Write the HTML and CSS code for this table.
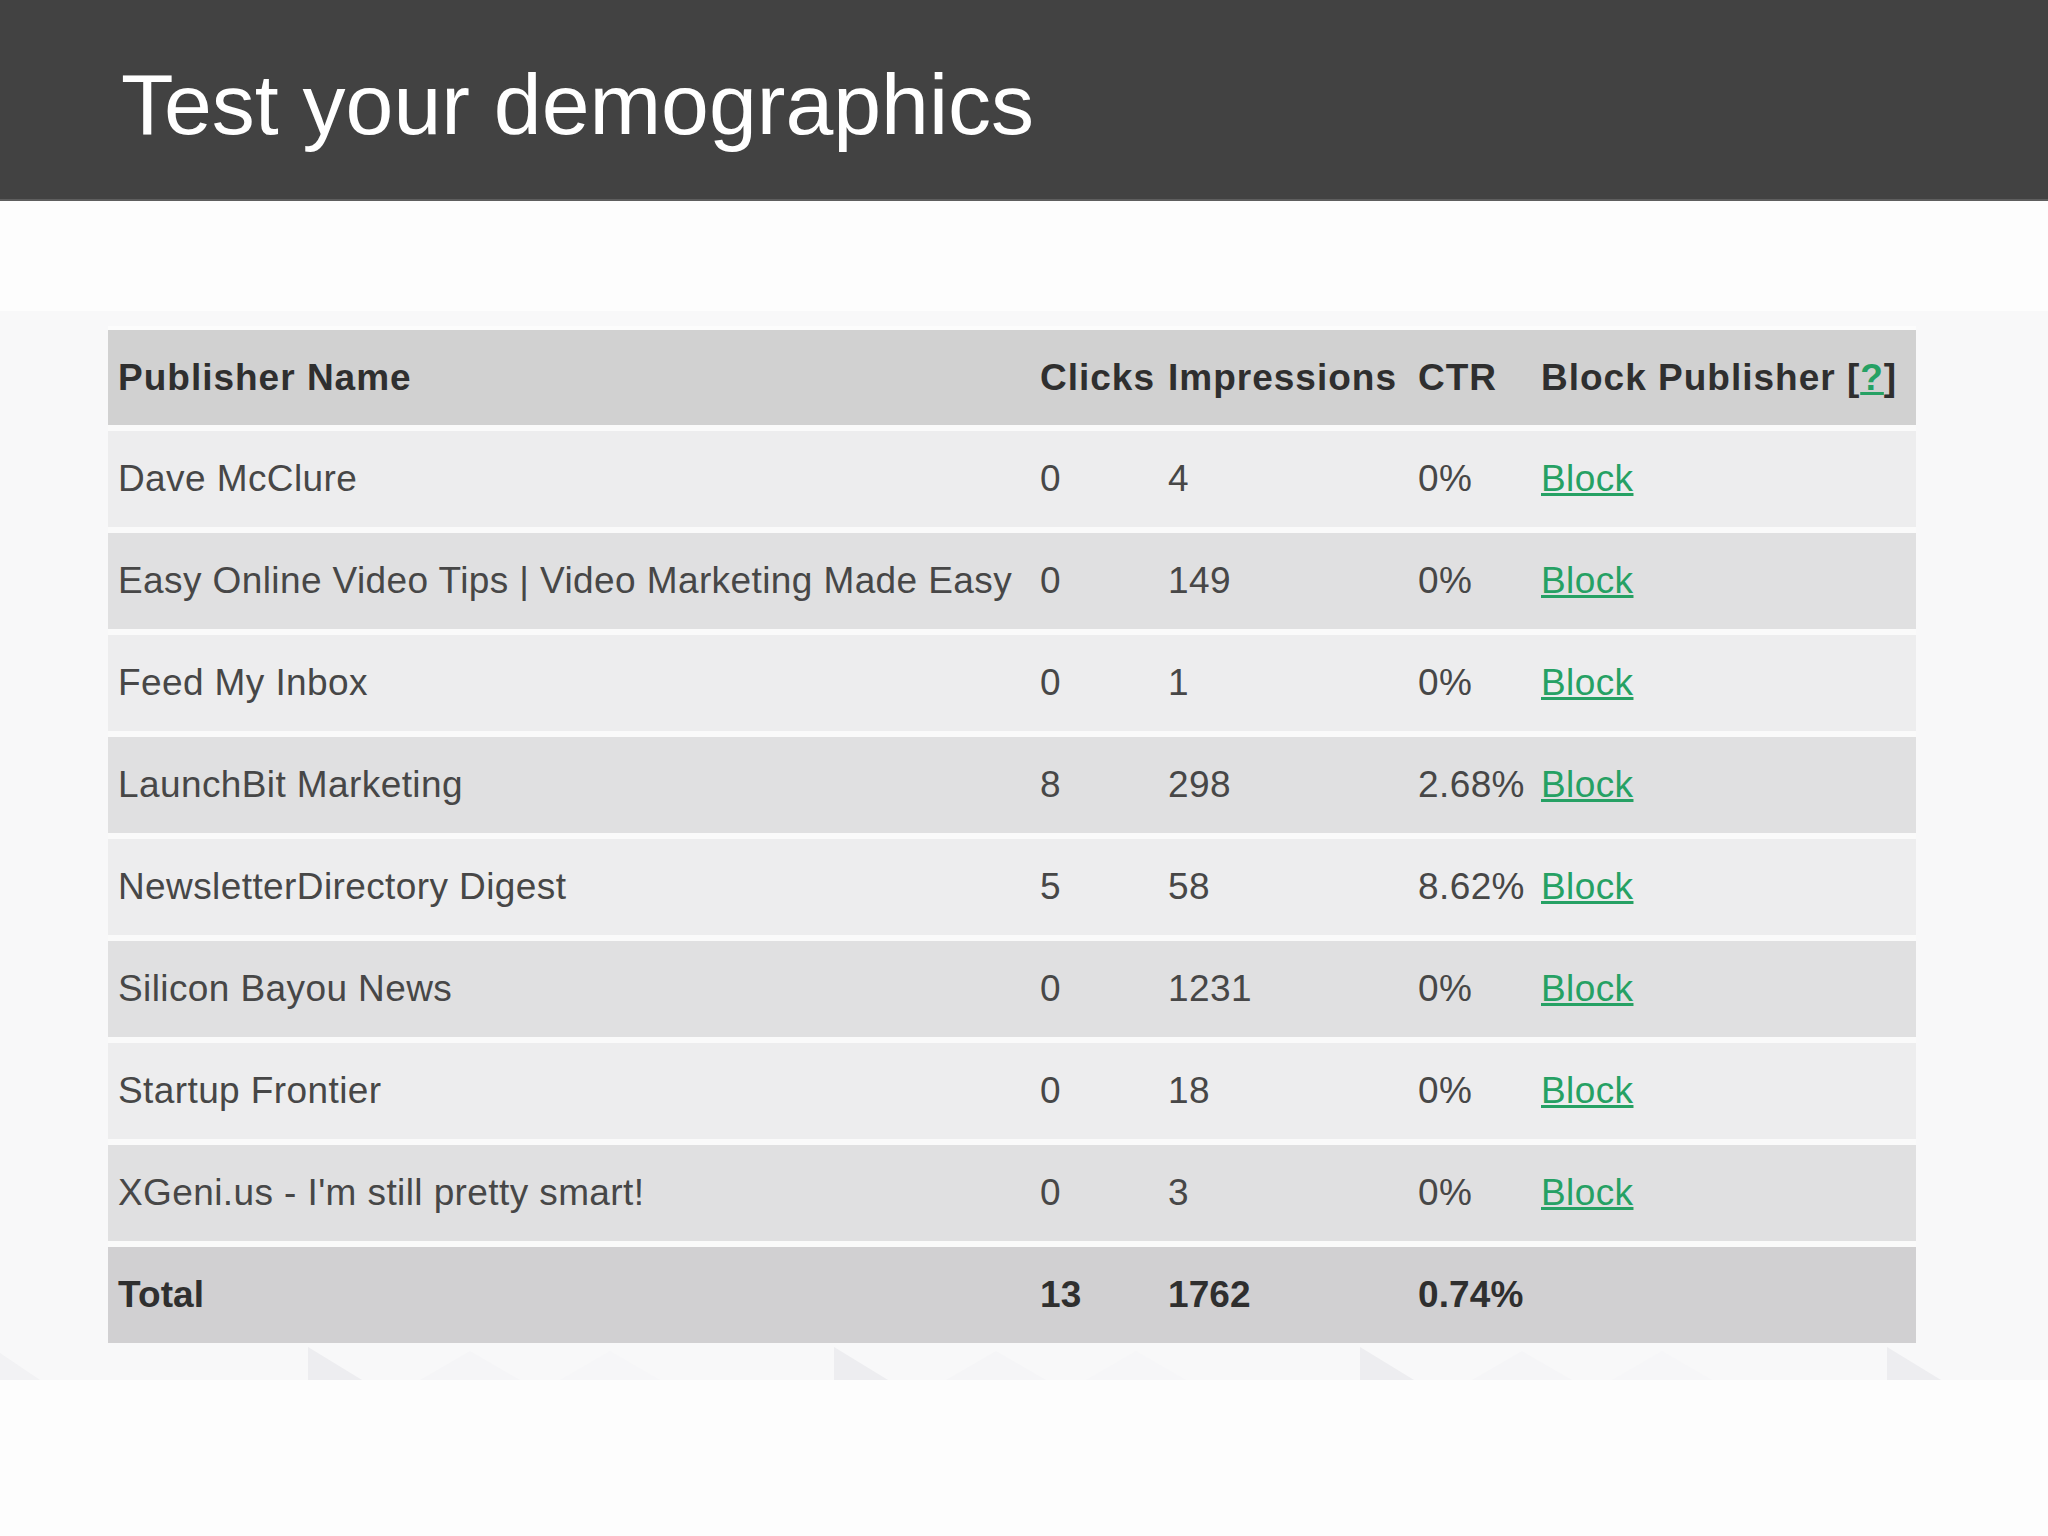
FILE: index.html
```html
<!DOCTYPE html>
<html lang="en">
<head>
<meta charset="utf-8">
<title>Test your demographics</title>
<link rel="stylesheet" href="styles.css">
</head>
<body>
<header class="slide-header">
  <h1 class="slide-title">Test your demographics</h1>
</header>
<section class="content">
  <table class="stats">
    <colgroup>
      <col class="c-name"><col class="c-clicks"><col class="c-impr"><col class="c-ctr"><col class="c-block">
    </colgroup>
    <thead>
      <tr class="head">
        <th>Publisher Name</th><th>Clicks</th><th>Impressions</th><th>CTR</th><th>Block Publisher [<a href="#" class="link">?</a>]</th>
      </tr>
    </thead>
    <tbody>
      <tr class="light"><td>Dave McClure</td><td>0</td><td>4</td><td>0%</td><td><a href="#" class="link">Block</a></td></tr>
      <tr class="dark"><td>Easy Online Video Tips | Video Marketing Made Easy</td><td>0</td><td>149</td><td>0%</td><td><a href="#" class="link">Block</a></td></tr>
      <tr class="light"><td>Feed My Inbox</td><td>0</td><td>1</td><td>0%</td><td><a href="#" class="link">Block</a></td></tr>
      <tr class="dark"><td>LaunchBit Marketing</td><td>8</td><td>298</td><td>2.68%</td><td><a href="#" class="link">Block</a></td></tr>
      <tr class="light"><td>NewsletterDirectory Digest</td><td>5</td><td>58</td><td>8.62%</td><td><a href="#" class="link">Block</a></td></tr>
      <tr class="dark"><td>Silicon Bayou News</td><td>0</td><td>1231</td><td>0%</td><td><a href="#" class="link">Block</a></td></tr>
      <tr class="light"><td>Startup Frontier</td><td>0</td><td>18</td><td>0%</td><td><a href="#" class="link">Block</a></td></tr>
      <tr class="dark"><td>XGeni.us - I'm still pretty smart!</td><td>0</td><td>3</td><td>0%</td><td><a href="#" class="link">Block</a></td></tr>
    </tbody>
    <tfoot>
      <tr class="total"><td>Total</td><td>13</td><td>1762</td><td>0.74%</td><td></td></tr>
    </tfoot>
  </table>
  <div class="pattern">
    <svg class="pattern-svg" width="2048" height="37" viewBox="0 0 2048 37" aria-hidden="true">
      <polygon points="0,10 40,37 0,37" fill="#f2f2f4"/>
      <polygon points="308,4 308,37 362,37" fill="#ededf0"/>
      <polygon points="834,4 834,37 888,37" fill="#ededf0"/>
      <polygon points="1360,4 1360,37 1414,37" fill="#ededf0"/>
      <polygon points="1887,4 1887,37 1941,37" fill="#ededf0"/>
      <polygon points="420,37 470,8 520,37" fill="#f5f5f7"/>
      <polygon points="560,37 610,8 660,37" fill="#f6f6f8"/>
      <polygon points="946,37 996,8 1046,37" fill="#f5f5f7"/>
      <polygon points="1086,37 1136,8 1186,37" fill="#f6f6f8"/>
      <polygon points="1472,37 1522,8 1572,37" fill="#f5f5f7"/>
      <polygon points="1612,37 1662,8 1712,37" fill="#f6f6f8"/>
    </svg>
  </div>
</section>
</body>
</html>
```

FILE: styles.css
```css
html, body {
  margin: 0;
  padding: 0;
}

body {
  background: #fdfdfd;
  font-family: "Liberation Sans", Arial, sans-serif;
  width: 2048px;
  min-height: 1536px;
}

.slide-header {
  height: 199px;
  background: #424242;
  border-bottom: 2px solid #5e5e5e;
  box-sizing: content-box;
}

.slide-title {
  margin: 0;
  padding: 62px 0 0 121px;
  font-size: 86px;
  line-height: 85px;
  font-weight: normal;
  color: #ffffff;
}

.content {
  margin-top: 110px;
  background: #f8f8f9;
  padding-top: 15px;
}

.stats {
  margin-left: 108px;
  width: 1808px;
  border-collapse: collapse;
  table-layout: fixed;
  font-size: 37px;
  letter-spacing: 0.4px;
  color: #474747;
}

.c-name { width: 922px; }
.c-clicks { width: 128px; }
.c-impr { width: 250px; }
.c-ctr { width: 123px; }
.c-block { width: 385px; }

.stats th,
.stats td {
  padding: 0 0 0 10px;
  text-align: left;
  vertical-align: middle;
  white-space: nowrap;
}

.stats th {
  height: 95px;
  font-weight: bold;
  letter-spacing: 1px;
  color: #2f2f2f;
  background: #d1d1d1;
  border-top: 4px solid #fcfcfc;
}

.stats td {
  height: 96px;
  border-top: 6px solid #fafafa;
}

.light td { background: #ededee; }
.dark td { background: #e0e0e1; }

.total td {
  background: #d1d0d2;
  font-weight: bold;
  letter-spacing: 0.1px;
  color: #2f2f2f;
}

.link {
  color: #26a164;
  text-decoration: underline;
}

.pattern {
  height: 37px;
  overflow: hidden;
}

.pattern-svg {
  display: block;
}
```
